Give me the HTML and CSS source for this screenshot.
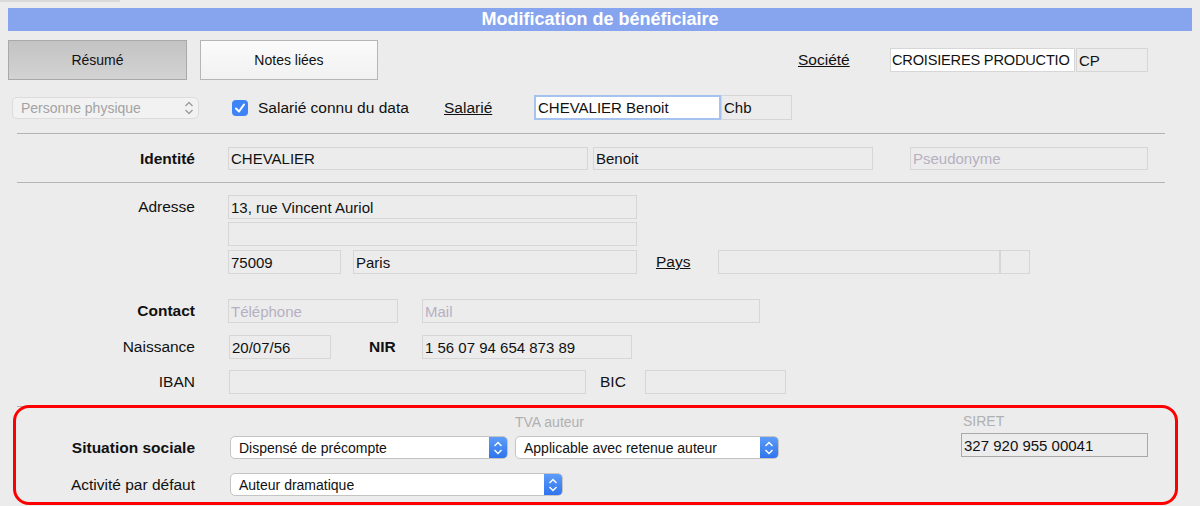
FILE: index.html
```html
<html>
<head>
    <title>Modification de bénéficiaire</title>
    <link rel="stylesheet" href="styles.css">
</head>
<body>

<div class="topline"></div>
<div class="page">
    <div class="title">Modification de bénéficiaire</div>

    <div class="tabs">
        <button class="tab tab-active">Résumé</button>
        <button class="tab tab-plain">Notes liées</button>
        <div class="company">
            <span class="link company-label">Société</span>
            <input class="field field-white company-name" value="CROISIERES PRODUCTIO">
            <input class="field company-code" value="CP">
        </div>
    </div>

    <div class="row row-employee">
        <div class="select select-disabled person-type">
            <span>Personne physique</span>
            <svg class="updown" width="10" height="14" viewBox="0 0 10 14"><path d="M1.5 5 L5 1.5 L8.5 5 M1.5 9 L5 12.5 L8.5 9" fill="none" stroke="#9a9a9a" stroke-width="1.3"/></svg>
        </div>
        <span class="checkbox">
            <svg width="16" height="16" viewBox="0 0 16 16"><path d="M4 8.5 L7 11.5 L12 4.5" fill="none" stroke="#fff" stroke-width="2" stroke-linecap="round" stroke-linejoin="round"/></svg>
        </span>
        <span class="check-label">Salarié connu du data</span>
        <span class="link employee-label">Salarié</span>
        <input class="field field-focus employee-name" value="CHEVALIER Benoit">
        <input class="field employee-code" value="Chb">
    </div>

    <hr class="divider">

    <div class="row row-identity">
        <div class="row-label strong">Identité</div>
        <input class="field f-lastname" value="CHEVALIER">
        <input class="field f-firstname" value="Benoit">
        <input class="field f-pseudo" placeholder="Pseudonyme">
    </div>

    <hr class="divider divider-second">

    <div class="row row-address">
        <div class="row-label">Adresse</div>
        <input class="field f-address" value="13, rue Vincent Auriol">
    </div>
    <div class="row row-address2">
        <div class="row-label"></div>
        <input class="field f-address" value="">
    </div>
    <div class="row row-city">
        <div class="row-label"></div>
        <input class="field f-zip" value="75009">
        <input class="field f-city" value="Paris">
        <span class="link country-label">Pays</span>
        <input class="field f-country" value="">
        <input class="field f-country-code" value="">
    </div>

    <div class="row row-contact">
        <div class="row-label strong">Contact</div>
        <input class="field f-phone" placeholder="Téléphone">
        <input class="field f-mail" placeholder="Mail">
    </div>
    <div class="row row-birth">
        <div class="row-label">Naissance</div>
        <input class="field f-birth" value="20/07/56">
        <span class="inline-label strong nir-label">NIR</span>
        <input class="field f-nir" value="1 56 07 94 654 873 89">
    </div>
    <div class="row row-bank">
        <div class="row-label">IBAN</div>
        <input class="field f-iban" value="">
        <span class="inline-label bic-label">BIC</span>
        <input class="field f-bic" value="">
    </div>

    <hr class="divider divider-third">

    <div class="social">
        <div class="social-row">
            <div class="row-label strong social-label">Situation sociale</div>
            <div class="select select-active f-regime">
                <span>Dispensé de précompte</span>
                <span class="stepper"><svg width="10" height="14" viewBox="0 0 10 14"><path d="M1.5 5 L5 1.5 L8.5 5 M1.5 9 L5 12.5 L8.5 9" fill="none" stroke="#fff" stroke-width="1.4"/></svg></span>
            </div>
            <div class="stack f-vat">
                <div class="caption">TVA auteur</div>
                <div class="select select-active">
                    <span>Applicable avec retenue auteur</span>
                    <span class="stepper"><svg width="10" height="14" viewBox="0 0 10 14"><path d="M1.5 5 L5 1.5 L8.5 5 M1.5 9 L5 12.5 L8.5 9" fill="none" stroke="#fff" stroke-width="1.4"/></svg></span>
                </div>
            </div>
            <div class="stack f-siret">
                <div class="caption siret-caption">SIRET</div>
                <input class="field field-dark" value="327 920 955 00041">
            </div>
        </div>
        <div class="social-row social-row-second">
            <div class="row-label social-label">Activité par défaut</div>
            <div class="select select-active f-activity">
                <span>Auteur dramatique</span>
                <span class="stepper"><svg width="10" height="14" viewBox="0 0 10 14"><path d="M1.5 5 L5 1.5 L8.5 5 M1.5 9 L5 12.5 L8.5 9" fill="none" stroke="#fff" stroke-width="1.4"/></svg></span>
            </div>
        </div>
        <div class="highlight"></div>
    </div>
</div>

</body>
</html>
```

FILE: styles.css
```css
body {
    margin: 0;
    background-color: #ececec;
    color: #111;
    font-family: 'Liberation Sans', Arial, sans-serif;
    font-size: 15.5px;
    height: 506px;
    overflow: hidden;
}

.topline {
    width: 120px;
    height: 2px;
    background-color: #d9d9d9;
}

.page {
    padding: 6px 8px 0;
}

.title {
    height: 23px;
    line-height: 23px;
    background-color: #87a5ee;
    color: #fff;
    font-weight: bold;
    font-size: 18px;
    text-align: center;
}

.tabs {
    display: flex;
    margin-top: 9px;
    height: 40px;
}

.tab {
    box-sizing: border-box;
    height: 40px;
    padding: 0;
    font-family: inherit;
    font-size: 14px;
    color: #111;
    border: 1px solid #b5b5b5;
}

.tab-active {
    width: 179px;
    background: linear-gradient(#c3c3c3, #d3d3d3);
    border-color: #a9a9a9;
}

.tab-plain {
    width: 178px;
    margin-left: 13px;
    background: linear-gradient(#fbfbfb, #f1f1f1);
}

.company {
    display: flex;
    align-items: center;
    height: 24px;
    margin-top: 8px;
    margin-left: 420px;
}

.link {
    text-decoration: underline;
}

.company-label {
    width: 92px;
}

.field {
    box-sizing: border-box;
    height: 24px;
    margin: 0;
    padding: 0 2px;
    border: 1px solid #d6d6d6;
    background-color: #ececec;
    font-family: 'Liberation Sans', Arial, sans-serif;
    font-size: 15px;
    color: #111;
    outline: none;
}

.field::placeholder {
    color: #b6b0c2;
}

.field-white {
    background-color: #fff;
}

.field-focus {
    background-color: #fff;
    border: 2px solid #a6c3ef;
}

.field-dark {
    width: 187px;
    border-color: #a9a9a9;
}

.company-name {
    width: 185px;
    padding: 0 1px;
    font-size: 14.6px;
    letter-spacing: -0.2px;
}

.company-code {
    width: 72px;
    margin-left: 1px;
}

.row {
    display: flex;
    align-items: center;
    height: 24px;
}

.row-label {
    width: 187px;
    margin-right: 33px;
    text-align: right;
    flex-shrink: 0;
}

.strong {
    font-weight: bold;
}

.row-employee {
    height: 25px;
    margin-top: 15px;
}

.select {
    box-sizing: border-box;
    display: flex;
    align-items: center;
    justify-content: space-between;
    height: 23px;
    border-radius: 5px;
    font-size: 14px;
    overflow: hidden;
}

.select-disabled {
    height: 22px;
    padding: 0 4px 0 8px;
    background-color: #f2f2f2;
    border: 1px solid #dcdcdc;
    color: #a3a3a3;
}

.select-active {
    padding-left: 8px;
    background-color: #fff;
    border: 1px solid #c4c4c4;
    color: #111;
}

.stepper {
    display: flex;
    align-items: center;
    justify-content: center;
    width: 18px;
    height: 100%;
    background: linear-gradient(#5d9cf8, #2f74ee);
}

.person-type {
    width: 187px;
    margin-left: 4px;
}

.checkbox {
    display: flex;
    width: 16px;
    height: 16px;
    margin-left: 33px;
    border-radius: 4px;
    background-color: #3e84f6;
}

.check-label {
    width: 186px;
    margin-left: 10px;
}

.employee-label {
    width: 90px;
}

.employee-name {
    width: 187px;
    height: 25px;
}

.employee-code {
    width: 71px;
    height: 25px;
}

.divider {
    width: 1148px;
    height: 1px;
    margin: 13px 0 0 9px;
    border: 0;
    background-color: #b4b4b4;
}

.divider-second {
    margin-top: 12px;
}

.divider-third {
    margin-top: 12px;
}

.row-identity {
    height: 23px;
    margin-top: 13px;
}

.row-identity .field {
    height: 23px;
}

.f-lastname {
    width: 360px;
}

.f-firstname {
    width: 280px;
    margin-left: 5px;
}

.f-pseudo {
    width: 238px;
    margin-left: 37px;
}

.row-address {
    margin-top: 12px;
}

.row-address2 {
    margin-top: 3px;
}

.row-city {
    margin-top: 4px;
}

.f-address {
    width: 409px;
}

.f-zip {
    width: 113px;
}

.f-city {
    width: 284px;
    margin-left: 12px;
}

.country-label {
    width: 62px;
    margin-left: 19px;
}

.f-country {
    width: 282px;
}

.f-country-code {
    width: 30px;
}

.row-contact {
    margin-top: 25px;
}

.f-phone {
    width: 170px;
}

.f-mail {
    width: 338px;
    margin-left: 24px;
}

.row-birth {
    margin-top: 12px;
}

.f-birth {
    width: 102px;
    margin-left: 1px;
}

.inline-label {
    flex-shrink: 0;
}

.nir-label {
    width: 53px;
    margin-left: 38px;
}

.f-nir {
    width: 210px;
}

.row-bank {
    margin-top: 11px;
}

.f-iban {
    width: 357px;
    margin-left: 1px;
}

.bic-label {
    width: 45px;
    margin-left: 14px;
}

.f-bic {
    width: 141px;
}

.social {
    position: relative;
    padding-top: 6px;
}

.social-row {
    display: flex;
    align-items: flex-end;
}

.social-row-second {
    margin-top: 14px;
}

.social-label {
    height: 23px;
    line-height: 23px;
}

.f-regime {
    width: 278px;
    margin-left: 2px;
}

.stack {
    display: flex;
    flex-direction: column;
}

.caption {
    height: 16px;
    line-height: 16px;
    margin-bottom: 6px;
    font-size: 14px;
    color: #b0b0b0;
}

.f-vat {
    width: 264px;
    margin-left: 7px;
}

.f-siret {
    width: 187px;
    margin-left: 182px;
    margin-bottom: 2px;
}

.siret-caption {
    margin-bottom: 4px;
    padding-left: 2px;
}

.f-activity {
    width: 333px;
    margin-left: 2px;
}

.highlight {
    position: absolute;
    left: 5px;
    top: -2px;
    width: 1165px;
    height: 100px;
    box-sizing: border-box;
    border: 3.5px solid #ff0000;
    border-radius: 16px;
    pointer-events: none;
}
```
